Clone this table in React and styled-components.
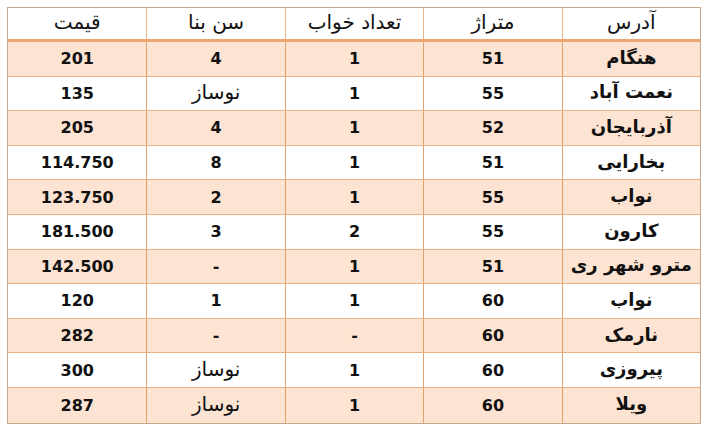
import React from "react";
import styled, { createGlobalStyle } from "styled-components";

const columns = ["آدرس", "متراژ", "تعداد خواب", "سن بنا", "قیمت"];

const rows = [
  ["هنگام", "51", "1", "4", "201"],
  ["نعمت آباد", "55", "1", "نوساز", "135"],
  ["آذربایجان", "52", "1", "4", "205"],
  ["بخارایی", "51", "1", "8", "114.750"],
  ["نواب", "55", "1", "2", "123.750"],
  ["کارون", "55", "2", "3", "181.500"],
  ["مترو شهر ری", "51", "1", "-", "142.500"],
  ["نواب", "60", "1", "1", "120"],
  ["نارمک", "60", "-", "-", "282"],
  ["پیروزی", "60", "1", "نوساز", "300"],
  ["ویلا", "60", "1", "نوساز", "287"],
];

const isNumeric = (v) => /^[\d.\-]+$/.test(v);

function App() {
  return (
    <>
      <GlobalStyle />
      <Page>
        <Table dir="rtl">
          <HeaderRow>
            {columns.map((c) => (
              <HeadCell key={c}>{c}</HeadCell>
            ))}
          </HeaderRow>
          {rows.map((row, i) => (
            <Row key={i} $shaded={i % 2 === 0} $last={i === rows.length - 1}>
              {row.map((v, j) =>
                isNumeric(v) ? (
                  <Cell key={j}>{v}</Cell>
                ) : (
                  <WordCell key={j} $strong={j === 0}>
                    {v}
                  </WordCell>
                )
              )}
            </Row>
          ))}
        </Table>
      </Page>
    </>
  );
}
export default App;

const GlobalStyle = createGlobalStyle`
  html, body {
    margin: 0;
    padding: 0;
    background: #ffffff;
  }
  body {
    font-family: "DejaVu Sans", Tahoma, sans-serif;
    color: #111111;
  }
`;

const Page = styled.div`
  width: 707px;
  height: 432px;
  padding: 7px 6px 0 7px;
  box-sizing: border-box;
`;

const Table = styled.div`
  width: 694px;
  border: 1px solid #c9a889;
  box-sizing: border-box;
  display: flex;
  flex-direction: column;
`;

const HeaderRow = styled.div`
  display: grid;
  grid-template-columns: repeat(5, 1fr);
  height: 34px;
  box-sizing: border-box;
  border-bottom: 3px solid #eda672;
  background: #ffffff;
`;

const HeadCell = styled.div`
  display: flex;
  align-items: center;
  justify-content: center;
  font-size: 20px;
  font-weight: normal;
  border-left: 1px solid #e8b48a;
  padding-bottom: 3px;
  &:last-child {
    border-left: none;
  }
`;

const Row = styled.div`
  display: grid;
  grid-template-columns: repeat(5, 1fr);
  height: 34.6px;
  box-sizing: border-box;
  border-bottom: ${(p) => (p.$last ? "none" : "1px solid #e9b083")};
  background: ${(p) => (p.$shaded ? "#fde3d2" : "#ffffff")};
`;

const Cell = styled.div`
  display: flex;
  align-items: center;
  justify-content: center;
  font-size: 16px;
  font-weight: bold;
  border-left: 1px solid #dea170;
  &:last-child {
    border-left: none;
  }
`;

const WordCell = styled(Cell)`
  font-size: ${(p) => (p.$strong ? "18px" : "20px")};
  font-weight: ${(p) => (p.$strong ? "bold" : "normal")};
  padding-bottom: 3px;
`;
